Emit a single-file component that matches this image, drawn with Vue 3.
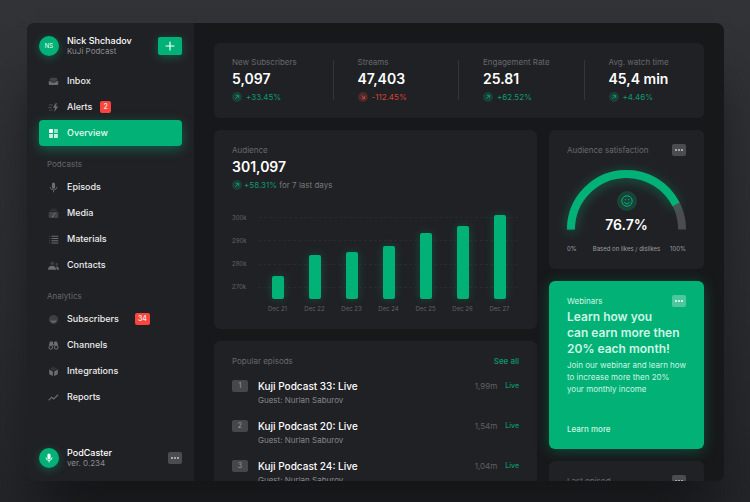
<script setup>
const navGroups = [
  {
    title: '',
    items: [
      { label: 'Inbox', icon: 'inbox' },
      { label: 'Alerts', icon: 'alerts', badge: 2 },
      { label: 'Overview', icon: 'overview', active: true },
    ],
  },
  {
    title: 'Podcasts',
    items: [
      { label: 'Episods', icon: 'mic' },
      { label: 'Media', icon: 'media' },
      { label: 'Materials', icon: 'list' },
      { label: 'Contacts', icon: 'people' },
    ],
  },
  {
    title: 'Analytics',
    items: [
      { label: 'Subscribers', icon: 'face', badge: 34, spaced: true },
      { label: 'Channels', icon: 'binoculars' },
      { label: 'Integrations', icon: 'box' },
      { label: 'Reports', icon: 'trend' },
    ],
  },
]

// Each shape: d = path data, o = opacity, s = stroke width (filled when absent)
const icons = {
  inbox: [
    { d: 'M2.6 2h6.8l1.3 3H8.6L7.9 6.2H4.1L3.4 5H1.3z', o: 0.45 },
    { d: 'M.8 5.8h2.6l.8 1.3h3.6l.8-1.3h2.6v2.8q0 1.2-1.2 1.2H2Q.8 9.8.8 8.6z' },
  ],
  alerts: [
    { d: 'M8.6 1.2 5.4 6.4h2.2L6.8 10.8 11.2 5H8.7L9.6 1.2z' },
    { d: 'M1 3.2h4.6M.2 6h3.8M1 8.8h4.2', s: 1, o: 0.6 },
  ],
  overview: [
    { d: 'M1.800 1.100h3q.6 0 .6.600v3.700H1.200V1.700q0-.6.600-.6z' },
    { d: 'M1.200 6.600h4.200v4.200H1.800q-.6 0-.6-.6zM6.600 6.600h4.200v3.600q0 .6-.6.600H6.600z', o: 0.8 },
    { d: 'M6.600 1.100h3.600q.6 0 .6.600v3.700H6.600z', o: 0.6 },
  ],
  mic: [
    { d: 'M6 .6q1.700 0 1.700 1.700v3.400Q7.700 7.400 6 7.400T4.300 5.700V2.300Q4.300.6 6 .6z' },
    { d: 'M2.300 5.300Q2.500 8.700 6 8.700t3.700-3.400M6 8.700v2.600', s: 0.9 },
  ],
  media: [
    { d: 'M3 .7h6v.9H3zM2 2.500h8v1H2z', o: 0.35 },
    { d: 'M1.600 4.300h8.800q.8 0 .8.800v5q0 .9-.9.900H1.700q-.9 0-.9-.9v-5q0-.8.800-.8z', o: 0.45 },
    { d: 'M8.300 5.200 5.800 5.900v2.300q-1.800-.1-1.700 1 .1 1 1.400.8.900-.2.900-1.200V7l1.900-.5z' },
  ],
  list: [
    { d: 'M3.800 2.500h7.400M3.800 4.900h7.400M3.800 7.300h7.400M3.800 9.700h7.400', s: 1.1 },
    { d: 'M1 2.500h1.400M1 4.900h1.400M1 7.300h1.400M1 9.700h1.400', s: 1, o: 0.5 },
  ],
  people: [
    { d: 'M2.600 3.500a2 2 0 1 1 4 0 2 2 0 0 1-4 0zM8 4.900a1.500 1.500 0 1 1 3 0 1.500 1.500 0 0 1-3 0z', o: 0.4 },
    { d: 'M0 10.500Q.3 6.300 4.400 6.300t4.400 4.200zM9.500 10.500q0-2.200-1-3.300 3.100-.3 3.500 3.300z' },
  ],
  face: [
    { d: 'M6 1a5 5 0 1 1 0 10A5 5 0 0 1 6 1z', o: 0.4 },
    { d: 'M2.900 6.500Q6 8.400 9.100 6.500 8.700 9.500 6 9.500T2.900 6.500z' },
  ],
  binoculars: [
    { d: 'M2.800 1.700h1.800q.9 0 .9 1v2h1v-2q0-1 .9-1h1.800q.8 0 1 .9l.8 3H9.500L6 6 2.500 5.600H1l.8-3q.2-.9 1-.9z' },
    { d: 'M1 8a2 2 0 1 1 4 0 2 2 0 0 1-4 0zM7 8a2 2 0 1 1 4 0 2 2 0 0 1-4 0z', s: 1.1 },
  ],
  box: [
    { d: 'M6 .9 10 3 6 5.100 2 3z', o: 0.25 },
    { d: 'M1.300 3.900 5.300 6v5L1.800 9.200q-.5-.3-.5-.9zM10.700 3.900 6.700 6v5l3.500-1.800q.5-.3.500-.9z' },
  ],
  trend: [{ d: 'M.8 9 4 5.700l2.200 1.900L11 3', s: 1.2 }],
}

const stats = [
  { label: 'New Subscribers', value: '5,097', change: '+33.45%' },
  { label: 'Streams', value: '47,403', change: '-112.45%', down: true },
  { label: 'Engagement Rate', value: '25.81', change: '+62.52%' },
  { label: 'Avg. watch time', value: '45,4 min', change: '+4.46%' },
]

const axisMin = 265
const axisMax = 305
const ticks = [300, 290, 280, 270]
const bars = [
  { day: 'Dec 21', value: 274.9 },
  { day: 'Dec 22', value: 284 },
  { day: 'Dec 23', value: 285.1 },
  { day: 'Dec 24', value: 287.6 },
  { day: 'Dec 25', value: 293.2 },
  { day: 'Dec 26', value: 296.4 },
  { day: 'Dec 27', value: 301.097 },
]
const barHeight = (value) => `${((value - axisMin) / (axisMax - axisMin)) * 100}%`

const episodes = [
  { title: 'Kuji Podcast 33: Live', guest: 'Nurlan Saburov', plays: '1,99m' },
  { title: 'Kuji Podcast 20: Live', guest: 'Nurlan Saburov', plays: '1,54m' },
  { title: 'Kuji Podcast 24: Live', guest: 'Nurlan Saburov', plays: '1,04m' },
]
</script>

<template>
  <div class="page">
    <div class="window">
      <aside class="sidebar">
        <header class="profile">
          <span class="avatar">NS</span>
          <div class="identity">
            <strong>Nick Shchadov</strong>
            <span>KuJi Podcast</span>
          </div>
          <button class="add" type="button" aria-label="Add">
            <svg width="12" height="12" viewBox="0 0 12 12"><path d="M6 2v8M2 6h8" stroke="currentColor" stroke-width="1.2" stroke-linecap="round" /></svg>
          </button>
        </header>

        <nav class="nav">
          <section v-for="group in navGroups" :key="group.title" class="group">
            <h2 v-if="group.title">{{ group.title }}</h2>
            <a
              v-for="item in group.items"
              :key="item.label"
              href="#"
              class="nav-item"
              :class="{ active: item.active, spaced: item.spaced }"
            >
              <svg class="nav-icon" width="11" height="11" viewBox="0 0 12 12">
                <path
                  v-for="(shape, i) in icons[item.icon]"
                  :key="i"
                  :d="shape.d"
                  :opacity="shape.o || 1"
                  :fill="shape.s ? 'none' : 'currentColor'"
                  :stroke="shape.s ? 'currentColor' : 'none'"
                  :stroke-width="shape.s || 0"
                />
              </svg>
              <span>{{ item.label }}</span>
              <span v-if="item.badge" class="badge">{{ item.badge }}</span>
            </a>
          </section>
        </nav>

        <footer class="product">
          <span class="avatar">
            <svg width="10" height="10" viewBox="0 0 12 12">
              <path d="M6 .6q1.900 0 1.900 1.900v3.200Q7.900 7.600 6 7.600T4.100 5.700V2.500Q4.100.6 6 .6z" fill="currentColor" />
              <path d="M2.300 5.300Q2.500 8.900 6 8.900t3.700-3.600M6 8.900v2.400" fill="none" stroke="currentColor" stroke-width="1.1" />
            </svg>
          </span>
          <div class="identity">
            <strong>PodCaster</strong>
            <span>ver. 0.234</span>
          </div>
          <button class="more" type="button" aria-label="More"><i></i><i></i><i></i></button>
        </footer>
      </aside>

      <main class="main">
        <section class="card stats">
          <div v-for="stat in stats" :key="stat.label" class="stat">
            <h3 class="label">{{ stat.label }}</h3>
            <p class="value">{{ stat.value }}</p>
            <p class="change wide" :class="{ down: stat.down }">
              <svg width="10" height="10" viewBox="0 0 10 10">
                <circle cx="5" cy="5" r="5" fill="currentColor" opacity="0.25" />
                <path :d="stat.down ? 'M3.300 3.300 6.600 6.600M6.700 3.800v2.900H3.800' : 'M3.300 6.700 6.600 3.400M3.800 3.300h2.900v2.900'" fill="none" stroke="currentColor" />
              </svg>
              <span>{{ stat.change }}</span>
            </p>
          </div>
        </section>

        <div class="columns">
          <div class="column">
            <section class="card">
              <h3 class="label">Audience</h3>
              <p class="value">301,097</p>
              <p class="change">
                <svg width="10" height="10" viewBox="0 0 10 10">
                  <circle cx="5" cy="5" r="5" fill="currentColor" opacity="0.25" />
                  <path d="M3.300 6.700 6.600 3.400M3.800 3.300h2.900v2.900" fill="none" stroke="currentColor" />
                </svg>
                <span>+58.31% <em>for 7 last days</em></span>
              </p>
              <div class="chart">
                <div class="ticks">
                  <div v-for="tick in ticks" :key="tick" class="tick"><span>{{ tick }}k</span></div>
                </div>
                <div class="bars">
                  <div v-for="bar in bars" :key="bar.day" class="slot">
                    <div class="bar" :style="{ height: barHeight(bar.value) }"></div>
                  </div>
                </div>
                <div class="days">
                  <span v-for="bar in bars" :key="bar.day">{{ bar.day }}</span>
                </div>
              </div>
            </section>

            <section class="card episodes">
              <header class="card-head">
                <h3 class="label">Popular episods</h3>
                <a href="#">See all</a>
              </header>
              <ol>
                <li v-for="(episode, i) in episodes" :key="episode.title">
                  <span class="rank">{{ i + 1 }}</span>
                  <div class="episode">
                    <h4>{{ episode.title }}</h4>
                    <p>Guest: {{ episode.guest }}</p>
                  </div>
                  <span class="plays">{{ episode.plays }}</span>
                  <span class="live">Live</span>
                </li>
              </ol>
            </section>
          </div>

          <div class="column">
            <section class="card satisfaction">
              <header class="card-head">
                <h3 class="label">Audience satisfaction</h3>
                <button class="more" type="button" aria-label="More"><i></i><i></i><i></i></button>
              </header>
              <div class="gauge">
                <svg class="arc" viewBox="0 0 120 60">
                  <path d="M4 60a56 56 0 0 1 112 0" fill="none" stroke="#4b4c50" stroke-width="8" />
                  <path class="arc-fill" d="M4 60a56 56 0 0 1 112 0" pathLength="100" stroke-dasharray="85 100" fill="none" stroke="#02b175" stroke-width="8" />
                </svg>
                <div class="reading">
                  <span class="mood">
                    <svg width="12" height="12" viewBox="0 0 12 12" fill="none" stroke="currentColor">
                      <circle cx="6" cy="6" r="5.2" />
                      <path d="M3.300 6.900Q4.200 8.800 6 8.800t2.700-1.900" />
                      <path d="M4.400 3.900v1.300M7.600 3.900v1.300" />
                    </svg>
                  </span>
                  <strong>76.7%</strong>
                </div>
              </div>
              <div class="scale"><span>0%</span><span>Based on likes / dislikes</span><span>100%</span></div>
            </section>

            <section class="card promo">
              <header class="card-head">
                <h3 class="label">Webinars</h3>
                <button class="more" type="button" aria-label="More"><i></i><i></i><i></i></button>
              </header>
              <h2>Learn how you<br />can earn more then<br />20% each month!</h2>
              <p>Join our webinar and learn how<br />to increase more then 20%<br />your monthly income</p>
              <a href="#">Learn more</a>
            </section>

            <section class="card">
              <header class="card-head">
                <h3 class="label">Last episod</h3>
                <button class="more" type="button" aria-label="More"><i></i><i></i><i></i></button>
              </header>
            </section>
          </div>
        </div>
      </main>
    </div>
  </div>
</template>

<style>
body {
  margin: 0;
  background: #17181a;
}
</style>

<style scoped>
* {
  box-sizing: border-box;
}
h2,
h3,
h4,
p,
ol {
  margin: 0;
  padding: 0;
  font-weight: 400;
}
a {
  text-decoration: none;
  color: inherit;
}
button {
  border: 0;
  padding: 0;
  font: inherit;
  color: inherit;
}
.page {
  height: 100vh;
  padding: 23px 26px 21px 27px;
  overflow: hidden;
  font: 8px/12px Inter, "Liberation Sans", sans-serif;
  color: #fff;
  background: linear-gradient(#323337, #2b2c30 60%, #242529);
}
.window {
  display: flex;
  height: 100%;
  overflow: hidden;
  border-radius: 8px;
  background: #17181a;
  box-shadow: 0 50px 50px -10px #151618;
}
.sidebar {
  display: flex;
  flex-direction: column;
  flex: 0 0 167px;
  padding: 12px 12px 13px;
  background: #202125;
}
.profile,
.product {
  display: flex;
  align-items: center;
  gap: 8px;
}
.avatar {
  display: flex;
  align-items: center;
  justify-content: center;
  width: 20px;
  height: 20px;
  border-radius: 50%;
  background: #02b175;
  box-shadow: 0 2px 8px rgba(2, 177, 117, 0.4);
  font-size: 6px;
}
.identity {
  display: flex;
  flex: 1;
  flex-direction: column;
  color: #8b8c90;
  line-height: 10px;
}
.identity strong {
  font-size: 9px;
  font-weight: 500;
  line-height: 11px;
  color: #fff;
}
.add {
  display: flex;
  align-items: center;
  justify-content: center;
  width: 24px;
  height: 18px;
  border-radius: 2px;
  background: #02b175;
  box-shadow: 0 2px 10px rgba(2, 177, 117, 0.4);
}
.more {
  display: flex;
  align-items: center;
  justify-content: center;
  gap: 1px;
  width: 14px;
  height: 12px;
  border-radius: 2px;
  background: #4b4c50;
}
.more i {
  width: 2px;
  height: 2px;
  border-radius: 50%;
  background: #c4c4c7;
}
.nav {
  display: flex;
  flex: 1;
  flex-direction: column;
  gap: 12px;
  padding-top: 12px;
}
.group h2 {
  padding-left: 8px;
  margin-bottom: 4px;
  font-size: 8px;
  line-height: 12px;
  color: #66676b;
}
.nav-item {
  display: flex;
  align-items: center;
  gap: 8px;
  height: 26px;
  padding-left: 9px;
  border-radius: 4px;
  font-size: 9px;
  font-weight: 500;
  color: #ececed;
}
.nav-icon {
  color: #6b6c70;
}
.nav-item.active {
  color: #e2fbf1;
  background: #02b175;
  box-shadow: 0 3px 12px rgba(2, 177, 117, 0.45);
}
.nav-item.active .nav-icon {
  color: #fff;
}
.nav-item.spaced .badge {
  margin-left: 8px;
}
.badge {
  padding: 0 3px;
  border-radius: 2px;
  background: #fb453c;
  font-size: 7px;
}
.main {
  flex: 1;
  min-width: 0;
  padding: 20px;
}
.card {
  padding: 14px 18px;
  border-radius: 6px;
  background: #202125;
}
.label {
  font-size: 8px;
  line-height: 12px;
  color: #67686c;
}
.value {
  font-size: 14px;
  font-weight: 600;
  line-height: 22px;
}
.change {
  display: flex;
  align-items: center;
  gap: 2px;
  line-height: 14px;
  color: #0c9b6a;
}
.change.wide {
  gap: 4px;
}
.change.down {
  color: #cf433c;
}
.change em {
  font-style: normal;
  color: #77787c;
}
.stats {
  display: grid;
  grid-template-columns: repeat(3, 251fr) 155fr;
  margin-bottom: 12px;
  padding: 13px 18px 14px;
}
.stat:not(:last-child) {
  margin-right: 24px;
  background: linear-gradient(#34353a, #34353a) right 4px / 1px 40px no-repeat;
}
.columns {
  display: grid;
  grid-template-columns: 323fr 155fr;
  gap: 12px;
}
.column {
  display: flex;
  flex-direction: column;
  gap: 12px;
  min-width: 0;
}
.chart {
  display: grid;
  grid-template: 93px 16px / 27px 1fr;
  padding: 14px 1px 0 0;
  font-size: 6px;
  color: #606165;
}
.ticks {
  display: flex;
  flex-direction: column;
  grid-area: 1 / 1 / 2 / 3;
}
.tick {
  display: flex;
  flex: 1;
  align-items: center;
  gap: 12px;
}
.tick::after {
  content: "";
  flex: 1;
  border-top: 1px dashed #292a2e;
}
.bars {
  display: flex;
  grid-area: 1 / 2;
}
.slot,
.days span {
  display: flex;
  flex: 1;
  align-items: flex-end;
  justify-content: center;
}
.bar {
  width: 12px;
  border-radius: 2px;
  background: #02b175;
  box-shadow: 0 0 10px rgba(2, 177, 117, 0.3);
}
.days {
  display: flex;
  grid-area: 2 / 2;
}
.card-head {
  display: flex;
  align-items: center;
  justify-content: space-between;
}
.episodes a,
.live {
  color: #0c9b6a;
  font-weight: 500;
}
.episodes ol {
  display: flex;
  flex-direction: column;
  gap: 12px;
  padding-top: 12px;
  list-style: none;
}
.episodes li {
  display: flex;
  align-items: flex-start;
  line-height: 14px;
}
.rank {
  width: 16px;
  margin: 1px 10px 0 0;
  border-radius: 2px;
  background: #46474b;
  color: #9b9c9f;
  font-size: 7px;
  line-height: 12px;
  text-align: center;
}
.episode {
  flex: 1;
}
.episode h4 {
  font-size: 10px;
  font-weight: 500;
  line-height: 14px;
}
.episode p {
  color: #85868a;
}
.plays {
  color: #5f6064;
}
.live {
  padding-left: 8px;
  font-size: 7px;
}
.gauge {
  display: grid;
  align-items: start;
  margin-top: 14px;
}
.gauge > * {
  grid-area: 1 / 1;
}
.arc {
  display: block;
  width: 100%;
  overflow: visible;
}
.arc-fill {
  filter: drop-shadow(0 2px 6px rgba(2, 177, 117, 0.45));
}
.reading {
  display: flex;
  flex-direction: column;
  align-items: center;
  gap: 5px;
  padding-top: 21px;
}
.reading strong {
  font-size: 14px;
  font-weight: 600;
  line-height: 18px;
}
.mood {
  display: flex;
  align-items: center;
  justify-content: center;
  width: 20px;
  height: 20px;
  border-radius: 50%;
  background: #184437;
  color: #0bae76;
}
.scale {
  display: grid;
  grid-template-columns: 1fr auto 1fr;
  padding-top: 9px;
  font-size: 6px;
  color: #9c9da0;
}
.scale span:last-child {
  text-align: right;
}
.promo {
  background: #02b175;
  box-shadow: 0 2px 14px rgba(2, 177, 117, 0.35);
  color: #cdf5e6;
}
.promo .label {
  color: #cdf5e6;
}
.promo .more {
  background: #4dc79d;
}
.promo .more i {
  background: #fff;
}
.promo h2 {
  margin-top: 2px;
  font-size: 12px;
  font-weight: 600;
  line-height: 16px;
}
.promo p {
  margin-top: 2px;
  white-space: nowrap;
}
.promo a {
  display: block;
  margin-top: 28px;
  font-weight: 500;
}
</style>
